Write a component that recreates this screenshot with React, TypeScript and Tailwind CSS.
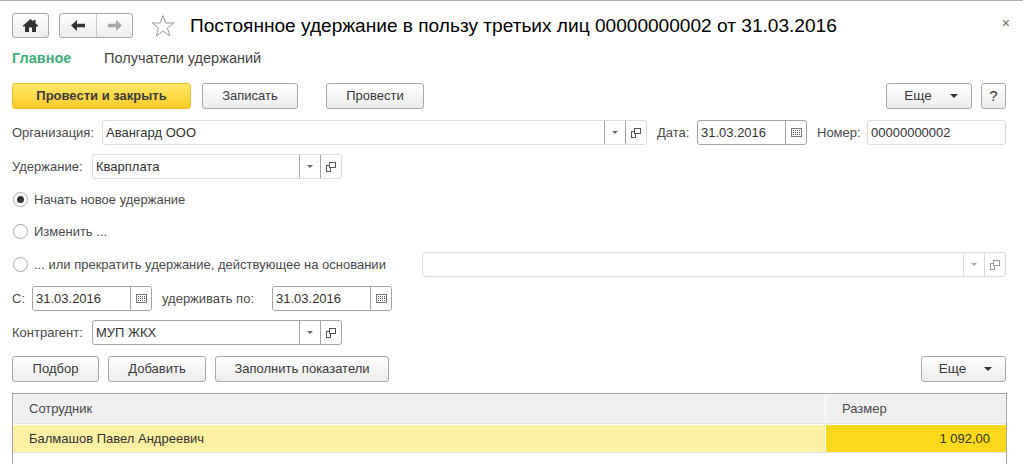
import React from "react";

function Btn({ w, label, ml, arrow }: { w: string; label: string; ml?: string; arrow?: boolean }) {
  return (
    <div className={`${w} ${ml ?? ""} h-full rounded-[3px] border border-[#a9a9a9] bg-gradient-to-b from-white to-[#ececec] flex items-center justify-center text-[#3a3a3a] text-[13px] shrink-0`}>
      <span className={arrow ? "ml-[6px] text-[13.5px]" : ""}>{label}</span>
      {arrow && <span className="ml-[18px] mr-[2px] w-0 h-0 border-x-[4px] border-x-transparent border-t-[4px] border-t-[#333]" />}
    </div>
  );
}

function CopyIcon({ color = "#555" }: { color?: string }) {
  return (
    <svg width="10" height="10" viewBox="0 0 10 10" fill="none" stroke={color} strokeWidth="1" shapeRendering="crispEdges">
      <rect x="3.5" y="0.5" width="6" height="5" />
      <path d="M3.5 3.5H0.5V9.5H4.5V5.5" />
    </svg>
  );
}

function CalIcon() {
  return (
    <svg width="11" height="9" viewBox="0 0 11 9" shapeRendering="crispEdges">
      <rect x="0.5" y="0.5" width="10" height="8" fill="#fff" stroke="#777" />
      {[2, 4, 6, 8].flatMap((x) =>
        [2, 4, 6].map((y) => <rect key={`${x}-${y}`} x={x} y={y} width="1" height="1" fill="#555" />)
      )}
    </svg>
  );
}

function Caret({ color = "#666" }: { color?: string }) {
  return <span className="w-0 h-0 border-x-[3px] border-x-transparent border-t-[3px]" style={{ borderTopColor: color }} />;
}

function SelectField({ w, value, active, disabled, ml }: { w: string; value: string; active?: boolean; disabled?: boolean; ml?: string }) {
  const b = active ? "border-[#a5a5a5]" : "border-[#dcdcdc]";
  const sep = disabled ? "border-[#dcdcdc]" : "border-[#a5a5a5]";
  return (
    <div className={`${w} ${ml ?? ""} h-full rounded-[3px] border ${b} bg-white flex items-stretch shrink-0`}>
      <div className="flex-1 pl-[3px] flex items-center text-[13px] text-[#333] whitespace-nowrap">{value}</div>
      <div className={`w-[21px] border-l ${sep} flex items-center justify-center`}>
        <Caret color={disabled ? "#aaa" : "#666"} />
      </div>
      <div className={`w-[21px] border-l ${sep} flex items-center justify-center`}>
        <CopyIcon color={disabled ? "#999" : "#555"} />
      </div>
    </div>
  );
}

function DateField({ w, value, ml }: { w: string; value: string; ml?: string }) {
  return (
    <div className={`${w} ${ml ?? ""} h-full rounded-[3px] border border-[#a5a5a5] bg-white flex items-stretch shrink-0`}>
      <div className="flex-1 pl-[3px] flex items-center text-[13px] text-[#333]">{value}</div>
      <div className="w-[21px] border-l border-[#a5a5a5] flex items-center justify-center">
        <CalIcon />
      </div>
    </div>
  );
}

function Label({ children, w, ml }: { children: React.ReactNode; w?: string; ml?: string }) {
  return <div className={`${w ?? ""} ${ml ?? ""} text-[13px] text-[#4a4a4a] whitespace-nowrap shrink-0`}>{children}</div>;
}

function Radio({ checked, label }: { checked?: boolean; label: string }) {
  return (
    <div className="flex items-center shrink-0">
      <div className="ml-[1px] w-[15px] h-[15px] rounded-full border border-[#a9a9a9] bg-white flex items-center justify-center">
        {checked && <div className="w-[7px] h-[7px] rounded-full bg-[#333]" />}
      </div>
      <span className="ml-[6px] text-[13px] text-[#4a4a4a] whitespace-nowrap">{label}</span>
    </div>
  );
}

export default function App() {
  return (
    <div
      className="relative w-[1023px] h-[464px] overflow-hidden bg-white border-t border-[#b0b0b0] pl-[12px] pr-[17px]"
      style={{ fontFamily: '"Liberation Sans", Arial, sans-serif' }}
    >
      <div className="absolute right-[13px] top-[15px] text-[#666] text-[14px] leading-none">×</div>

      {/* Header */}
      <div className="flex items-center h-[25px] mt-[12px]">
        <div className="w-[37px] h-full rounded-[3px] border border-[#a9a9a9] bg-gradient-to-b from-white to-[#ececec] flex items-center justify-center">
          <svg width="15" height="13" viewBox="0 0 15 13" fill="#333">
            <path d="M7.5 0L0 6.5V7.5H2V13H6V8.5H9V13H13V7.5H15V6.5L12.5 4.3V1H10.5V2.6Z" />
          </svg>
        </div>
        <div className="ml-[10px] w-[74px] h-full rounded-[3px] border border-[#a9a9a9] bg-gradient-to-b from-white to-[#ececec] flex">
          <div className="w-[37px] flex items-center justify-center border-r border-[#c8c8c8]">
            <svg width="14" height="11" viewBox="0 0 14 11" fill="#333"><path d="M0 5.5L6 0V3.7H14V7.3H6V11Z" /></svg>
          </div>
          <div className="flex-1 flex items-center justify-center">
            <svg width="14" height="11" viewBox="0 0 14 11" fill="#a8a8a8"><path d="M14 5.5L8 0V3.7H0V7.3H8V11Z" /></svg>
          </div>
        </div>
        <svg className="ml-[18px]" width="24" height="24" viewBox="0 0 24 24" fill="none" stroke="#9a9a9a" strokeWidth="1">
          <path d="M12 1.5L14.8 9H22.8L16.4 13.9L18.8 22L12 17.2L5.2 22L7.6 13.9L1.2 9H9.2Z" />
        </svg>
        <div className="ml-[15px] mt-[2px] text-[19.1px] text-black whitespace-nowrap">Постоянное удержание в пользу третьих лиц 00000000002 от 31.03.2016</div>
      </div>

      {/* Tabs */}
      <div className="flex items-center h-[18px] mt-[12px] text-[14.5px]">
        <span className="w-[92px] font-bold text-[#3fae7c]">Главное</span>
        <span className="text-[#444]">Получатели удержаний</span>
      </div>

      {/* Command bar */}
      <div className="flex h-[26px] mt-[15px]">
        <div className="w-[179px] h-full rounded-[3px] border border-[#f0c030] bg-gradient-to-b from-[#ffe868] to-[#fdcb1e] flex items-center justify-center text-[13px] font-bold text-[#3c3c3c]">
          Провести и закрыть
        </div>
        <Btn w="w-[96px]" ml="ml-[11px]" label="Записать" />
        <Btn w="w-[98px]" ml="ml-[28px]" label="Провести" />
        <div className="flex-1" />
        <Btn w="w-[86px]" label="Еще" arrow />
        <div className="ml-[9px] w-[25px] h-full rounded-[3px] border border-[#a9a9a9] bg-gradient-to-b from-white to-[#ececec] flex items-center justify-center text-[15px] text-[#333]">?</div>
      </div>

      {/* Organisation */}
      <div className="flex items-center h-[25px] mt-[11px]">
        <Label w="w-[90px]">Организация:</Label>
        <SelectField w="w-[545px]" value="Авангард ООО" />
        <Label ml="ml-[10px]" w="w-[40px]">Дата:</Label>
        <DateField w="w-[110px]" value="31.03.2016" />
        <Label ml="ml-[10px]" w="w-[50px]">Номер:</Label>
        <div className="w-[139px] h-full rounded-[3px] border border-[#dcdcdc] bg-white pl-[3px] flex items-center text-[13px] text-[#333]">00000000002</div>
      </div>

      {/* Deduction */}
      <div className="flex items-center h-[25px] mt-[9px]">
        <Label w="w-[80px]">Удержание:</Label>
        <SelectField w="w-[250px]" value="Кварплата" />
      </div>

      <div className="flex items-center h-[25px] mt-[8px]">
        <Radio checked label="Начать новое удержание" />
      </div>
      <div className="flex items-center h-[25px] mt-[7px]">
        <Radio label="Изменить ..." />
      </div>
      <div className="flex items-center h-[25px] mt-[8px]">
        <Radio label="... или прекратить удержание, действующее на основании" />
        <div className="flex-1" />
        <SelectField w="w-[584px]" value="" disabled />
      </div>

      {/* Dates */}
      <div className="flex items-center h-[25px] mt-[9px]">
        <Label w="w-[20px]">С:</Label>
        <DateField w="w-[120px]" value="31.03.2016" />
        <Label ml="ml-[10px]" w="w-[110px]">удерживать по:</Label>
        <DateField w="w-[120px]" value="31.03.2016" />
      </div>

      {/* Counterparty */}
      <div className="flex items-center h-[25px] mt-[9px]">
        <Label w="w-[80px]">Контрагент:</Label>
        <SelectField w="w-[250px]" value="МУП ЖКХ" active />
      </div>

      {/* Table commands */}
      <div className="flex h-[26px] mt-[11px]">
        <Btn w="w-[87px]" label="Подбор" />
        <Btn w="w-[98px]" ml="ml-[9px]" label="Добавить" />
        <Btn w="w-[174px]" ml="ml-[9px]" label="Заполнить показатели" />
        <div className="flex-1" />
        <Btn w="w-[85px]" label="Еще" arrow />
      </div>

      {/* Table */}
      <div className="mt-[11px] w-[995px] border border-[#a5a5a5] h-[80px]">
        <div className="flex h-[30px] bg-[#f0f0f0] border-b border-[#e4e4e4] text-[13px] text-[#4a4a4a]">
          <div className="w-[812px] pl-[16px] flex items-center">Сотрудник</div>
          <div className="flex-1 border-l border-white pl-[16px] flex items-center">Размер</div>
        </div>
        <div className="flex h-[28px] mt-[1px] border-b border-[#e4e4e4] text-[13px] text-[#333]">
          <div className="w-[812px] bg-[#fcf0a3] pl-[16px] flex items-center">Балмашов Павел Андреевич</div>
          <div className="flex-1 border-l border-white bg-[#fcd91c] pr-[16px] flex items-center justify-end">1 092,00</div>
        </div>
      </div>
    </div>
  );
}
